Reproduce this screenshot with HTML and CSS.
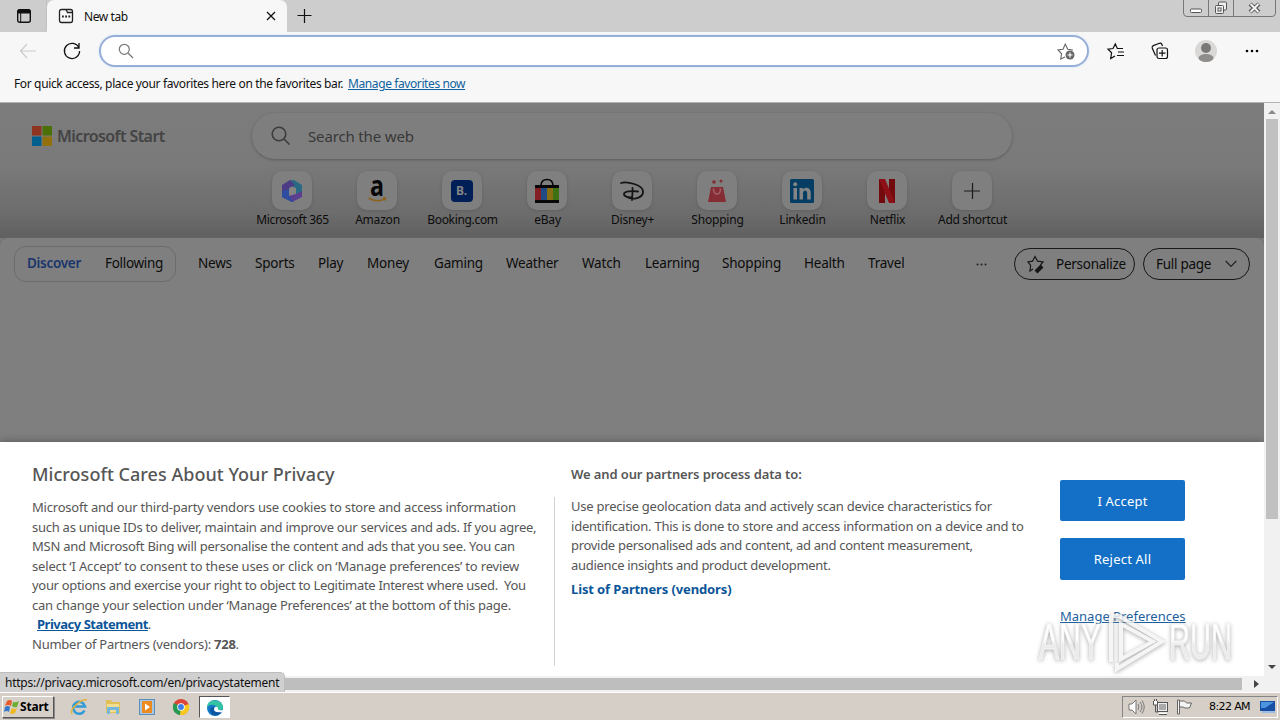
FILE: index.html
```
<!DOCTYPE html>
<html lang="en">
<head>
<meta charset="utf-8">
<title>New tab</title>
<link rel="stylesheet" href="styles.css">
</head>
<body>
<div class="screen">
  <header class="tabstrip">
    <div class="tab-actions"><svg width="14" height="14" viewBox="0 0 14 14"><rect x=".7" y=".7" width="12.6" height="12.6" rx="2" fill="none" stroke="#111" stroke-width="1.4"/><path d="M1 1h12v3H1zM3.700 4v9" stroke="#111" fill="#111"/></svg></div>
    <div class="tab">
      <svg width="16" height="16" viewBox="0 0 16 16" fill="none" stroke="#222" stroke-width="1.3"><path d="M3.500 1.500h9q2 0 2 2v9q0 2-2 2h-9q-2 0-2-2v-9q0-2 2-2zM8 1.500l1.500 3h5"/><path d="M4 8.500h1.800M7.200 8.500H9M10.400 8.500h1.800" stroke-width="1.800"/></svg>
      <span class="tab-title">New tab</span>
      <svg class="tab-close" width="10" height="10" viewBox="0 0 10 10"><path d="M1 1l8 8M9 1L1 9" stroke="#111" stroke-width="1.3"/></svg>
    </div>
    <svg class="newtab" width="16" height="16" viewBox="0 0 16 16"><path d="M7.500 1v14M.5 7.500h14" stroke="#111" stroke-width="1.2"/></svg>
    <div class="winbtns">
      <div class="wb wb-min"><svg width="14" height="6" viewBox="0 0 14 6"><rect x="1.500" y="1" width="11" height="3.500" rx="1" fill="#fff" stroke="#555"/></svg></div>
      <div class="wb wb-max"><svg width="14" height="14" viewBox="0 0 14 14" fill="#eee" stroke="#555"><rect x="4.500" y="1" width="8" height="8" rx="1"/><rect x="1.500" y="4.500" width="8" height="8" rx="1"/><rect x="4" y="7" width="3" height="3"/></svg></div>
      <div class="wb wb-close"><svg width="13" height="12" viewBox="0 0 13 12"><path d="M2 2l9 8M11 2l-9 8" stroke="#555" stroke-width="4.200"/><path d="M2.500 2l8 8M10.500 2l-8 8" stroke="#f2f2f2" stroke-width="2"/></svg></div>
    </div>
  </header>
  <div class="toolbar">
    <svg class="back" width="18" height="16" viewBox="0 0 18 16" fill="none" stroke="#ccc" stroke-width="1.2"><path d="M8 1L1.500 8 8 15M1.500 8H17"/></svg>
    <svg class="reload" width="18" height="18" viewBox="0 0 18 18" fill="none" stroke="#111" stroke-width="1.3"><path d="M15.800 5.500A7.600 7.600 0 1 0 16.600 9M16 1v5h-5"/></svg>
    <div class="omnibox">
      <svg width="16" height="16" viewBox="0 0 16 16" fill="none" stroke="#777" stroke-width="1.2"><circle cx="6.300" cy="6.300" r="5"/><path d="M10 10l5 5"/></svg>
      <svg class="addfav" width="18" height="18" viewBox="0 0 18 18"><path d="M8 15l-4.300 2 .9-5.200L1 8l5-.7L8.300 2l2.400 5.200 5.200.8" fill="none" stroke="#666" stroke-width="1.1"/><circle cx="13" cy="13" r="4.500" fill="#666"/><path d="M13 10.500v5M10.500 13h5" stroke="#fff" stroke-width="1.200"/></svg>
    </div>
    <svg class="fav" width="18" height="18" viewBox="0 0 18 18" fill="none" stroke="#111" stroke-width="1.2"><path d="M8 14l-4.300 2.500.9-5.700L1 7.200l5-.7L8.300 2l2 4.500H16M11 10h6M10 13.500h7"/></svg>
    <svg class="coll" width="18" height="18" viewBox="0 0 18 18" fill="none" stroke="#111" stroke-width="1.2"><path d="M4.500 13.500L1.200 6Q.8 4.300 2.300 3.600L8.500 1.300q1.700-.4 2.300 1l.7 1.700"/><rect x="6" y="6" width="10.500" height="10.500" rx="2"/><path d="M11.200 8v6.500M8 11.200h6.500"/></svg>
    <svg class="avatar" width="22" height="22" viewBox="0 0 22 22"><circle cx="11" cy="11" r="11" fill="#dad8d6"/><circle cx="11" cy="8" r="5" fill="#7a7876"/><ellipse cx="11" cy="18" rx="7.500" ry="4" fill="#8f8d8b"/></svg>
    <svg class="more" width="14" height="4" viewBox="0 0 14 4"><circle cx="2" cy="2" r="1.300"/><circle cx="7" cy="2" r="1.300"/><circle cx="12" cy="2" r="1.300"/></svg>
  </div>
  <div class="favbar"><span class="favtext">For quick access, place your favorites here on the favorites bar.</span><span class="favlink">Manage favorites now</span></div>

  <div class="viewport">
    <main class="page">
      <section class="hero">
        <div class="brand"><svg width="20" height="20" viewBox="0 0 20 20"><path fill="#8e3421" d="M0 0h9.500v9.500H0z"/><path fill="#4c7008" d="M10.500 0H20v9.500h-9.500z"/><path fill="#005f8c" d="M0 10.500h9.500V20H0z"/><path fill="#92700c" d="M10.500 10.500H20V20h-9.500z"/></svg><span class="brand-name">Microsoft Start</span></div>
        <div class="center">
          <div class="search"><svg width="20" height="20" viewBox="0 0 20 20" fill="none" stroke="#3c3c3c" stroke-width="1.6"><circle cx="8" cy="8" r="6.800"/><path d="M13 13l5.500 5.500"/></svg><span>Search the web</span></div>
          <div class="tiles">
            <div class="tile"><div class="ico"><svg width="24" height="24" viewBox="0 0 24 24"><path d="M9 1.500L14 1l8 5v8l-6 3V9L9 6z" fill="#286a83"/><path d="M10 1L2 6v12l4 2 3-3V9l6-3z" fill="#4d3c85"/><path d="M6 20l6 3 10-5v-6l-6 3-7 2z" fill="#5a3f90"/><path d="M2 12l7-2v7l5 6h-2l-10-5z" fill="#2e4ca0"/><path d="M12 8l4 2v4l-4 2-3-2v-4z" fill="#858585"/></svg></div><span class="l1">Microsoft 365</span></div>
            <div class="tile"><div class="ico"><svg width="24" height="26" viewBox="0 0 24 26"><text x="5" y="18" textLength="14" lengthAdjust="spacingAndGlyphs" class="amazon-a">a</text><path d="M3.500 20q8 5 16 1M18 19.500l2.500.5-.7 2.500" fill="none" stroke="#8b6220" stroke-width="1.500"/></svg></div><span>Amazon</span></div>
            <div class="tile"><div class="ico"><div class="booking">B.</div></div><span class="l3">Booking.com</span></div>
            <div class="tile"><div class="ico"><svg width="24" height="26" viewBox="0 0 24 26"><path d="M6 8q0-6.500 6-6.500T18 8" fill="none" stroke="#050505" stroke-width="1.500"/><path d="M0 7h24v18H0z" fill="#080808"/><path fill="#821e24" d="M0 10h6v12H0z"/><path fill="#204b87" d="M6 10h6v12H6z"/><path fill="#876e12" d="M12 10h6v12h-6z"/><path fill="#3d7114" d="M18 10h6v12h-6z"/></svg></div><span>eBay</span></div>
            <div class="tile"><div class="ico"><svg width="26" height="24" viewBox="0 0 26 24" fill="none" stroke="#151515" stroke-width="1.800" stroke-linecap="round"><path d="M2 4C7 2.500 25 5 24 13.500c-1 6-10 7-14 5.500M13.500 9c.5 4-.5 8-.5 12"/><path d="M19 12.500c-6-1-14 0-14 2.500s5 4 8 3"/></svg></div><span>Disney+</span></div>
            <div class="tile"><div class="ico"><svg width="20" height="24" viewBox="0 0 20 24"><path d="M4 8h12l3 15H1z" fill="#852c35"/><path d="M6.500 9.500q0 5.500 3.500 5.500t3.500-5.500" fill="none" stroke="#a05f65" stroke-width="1.600"/><circle cx="7" cy="3" r="1.800" fill="#852c35"/><circle cx="14" cy="2" r="1.500" fill="#852c35"/></svg></div><span>Shopping</span></div>
            <div class="tile"><div class="ico"><svg width="24" height="24" viewBox="0 0 24 24"><rect width="24" height="24" rx="1.500" fill="#063d63"/><path fill="#858585" d="M3.500 9H7v11.500H3.500zM9.500 9h3.400v1.600c2-3 7.800-2.700 7.800 3v6.900h-3.500v-6.300c0-3.600-4.200-3.300-4.200 0v6.300H9.500z"/><circle cx="5.200" cy="5.300" r="2" fill="#858585"/></svg></div><span>Linkedin</span></div>
            <div class="tile"><div class="ico"><svg width="18" height="24" viewBox="0 0 18 24"><path fill="#720a0e" d="M1 0h6v24H1zM11 0h6v24h-6z"/><path fill="#8d1016" d="M1 0h6l10 24h-6z"/></svg></div><span>Netflix</span></div>
            <div class="tile"><div class="ico"><svg width="16" height="16" viewBox="0 0 16 16"><path d="M8.500 0v16M0 8h16" stroke="#1c1c1c" stroke-width="1.200"/></svg></div><span class="l9">Add shortcut</span></div>
          </div>
        </div>
      </section>
      <section class="feed">
        <div class="pill-tabs"><b>Discover</b><span>Following</span></div>
        <nav class="topics"><span>News</span><span>Sports</span><span>Play</span><span>Money</span><span>Gaming</span><span>Weather</span><span>Watch</span><span>Learning</span><span>Shopping</span><span>Health</span><span>Travel</span></nav>
        <svg class="topic-more" width="11" height="3" viewBox="0 0 11 3" fill="#222"><circle cx="1.500" cy="1.500" r="1"/><circle cx="5.500" cy="1.500" r="1"/><circle cx="9.500" cy="1.500" r="1"/></svg>
        <div class="btn personalize"><svg width="18" height="18" viewBox="0 0 18 18"><path d="M6 14l-3 2 .6-5.500L1 7l4.500-.8L8 1.500l2.600 4.700L16 7l-2.500 3" fill="none" stroke="#151515" stroke-width="1.200"/><path d="M15 11L9 17" stroke="#151515" stroke-width="4"/></svg><span>Personalize</span></div>
        <div class="btn fullpage"><span>Full page</span><svg width="12" height="8" viewBox="0 0 12 8"><path d="M.7 1L6 6.500 11.300 1" fill="none" stroke="#222" stroke-width="1.200"/></svg></div>
      </section>
      <section class="consent">
        <div class="col policy">
          <h2>Microsoft Cares About Your Privacy</h2>
          <p><span class="a1">Microsoft and our third-party vendors use cookies to store and access information</span><br><span class="a2">such as unique IDs to deliver, maintain and improve our services and ads. If you agree,</span><br><span class="a3">MSN and Microsoft Bing will personalise the content and ads that you see. You can</span><br><span class="a4">select ‘I Accept’ to consent to these uses or click on ‘Manage preferences’ to review</span><br><span class="a5">your options and exercise your right to object to Legitimate Interest where used.&nbsp; You</span><br><span class="a6">can change your selection under ‘Manage Preferences’ at the bottom of this page.</span><br><span class="a7"><a>Privacy Statement</a>.</span><br><span class="a8">Number of Partners (vendors): <b>728</b>.</span></p>
        </div>
        <div class="col purposes">
          <h3>We and our partners process data to:</h3>
          <p><span class="b1">Use precise geolocation data and actively scan device characteristics for</span><br><span class="b2">identification. This is done to store and access information on a device and to</span><br><span class="b3">provide personalised ads and content, ad and content measurement,</span><br><span class="b4">audience insights and product development.</span></p>
          <div class="partners">List of Partners (vendors)</div>
        </div>
        <div class="choices">
          <div class="cta">I Accept</div>
          <div class="cta">Reject All</div>
          <a class="manage">Manage Preferences</a>
        </div>
      </section>
      <div class="hscroll"><div class="hthumb"></div><i class="arrow-right"></i></div>
    </main>
    <aside class="vscroll"><i class="arrow-up"></i><div class="vthumb"></div><i class="arrow-down"></i></aside>
    <div class="status">https://privacy.microsoft.com/en/privacystatement</div>
    <svg class="watermark" width="206" height="66" viewBox="0 0 206 66">
      <defs><linearGradient id="fade" x1="0" y1="0" x2="0" y2="1"><stop offset=".45" stop-color="#fff"/><stop offset=".55" stop-color="#e8e8e8"/></linearGradient></defs>
      <g class="wm"><text x="7" y="49" textLength="62" lengthAdjust="spacingAndGlyphs">ANY</text><text x="137" y="49" textLength="63" lengthAdjust="spacingAndGlyphs">RUN</text><path d="M89 14v35l32-17.500zM79 6v46M79 6l8 0L130 31.500 85 59v-6" fill="none" stroke="#f4f4f4" stroke-width="4"/></g></svg>
  </div>

  <footer class="taskbar">
    <div class="start"><svg width="16" height="16" viewBox="0 0 16 16"><path d="M3 2q3-2 5 0L7 7Q4 5 1 7z" fill="#e65c2a"/><path d="M9 3q3 1 6-1l-2 6q-3 1-5-1z" fill="#6eae32"/><path d="M1 8q3-2 5 0l-1 5q-2-2-5 0z" fill="#3578cb"/><path d="M8 9q2 2 5 0l-2 5q-3 2-5 0z" fill="#eeb91f"/></svg><span>Start</span></div>
    <svg class="q1" width="18" height="18" viewBox="0 0 18 18" fill="none"><path d="M14.500 12.500A6 6 0 1 1 15 8.500H5" stroke="#2f9bd8" stroke-width="2.600"/><path d="M2 16C-1 11 12 0 17 2" stroke="#e6b23a" stroke-width="1.400"/></svg>
    <svg class="q2" width="18" height="18" viewBox="0 0 18 18"><path d="M2 2h5l1 2h8v11H2z" fill="#e3bf58"/><path d="M3 6h12v8H3z" fill="#f3dd92"/><path d="M3 9h12v7h-3v-4H6v4H3z" fill="#74b8df"/></svg>
    <svg class="q3" width="16" height="16" viewBox="0 0 16 16"><rect x=".5" y=".5" width="15" height="15" fill="#a7c6df" stroke="#5d8fbc"/><rect x="3" y="2" width="10" height="12" fill="#ed8b20"/><path d="M6 4.500l5 3.500-5 3.500z" fill="#fff"/></svg>
    <svg class="q4" width="16" height="16" viewBox="0 0 16 16"><circle cx="8" cy="8" r="8" fill="#dc4437"/><path d="M8 8L1 4a8 8 0 0 0 6 12l4-6z" fill="#269b53"/><path d="M8 8l7.500-3A8 8 0 0 1 7 16z" fill="#f8c81c"/><circle cx="8" cy="8" r="3.800" fill="#fff"/><circle cx="8" cy="8" r="2.900" fill="#3f7ee8"/></svg>
    <div class="active"><svg width="18" height="18" viewBox="0 0 18 18"><circle cx="9" cy="9" r="8" fill="#1678c9"/><path d="M1 9C1 2 8 0 13 2.500c4 2 5 6 3 8-2 1.500-5 1-5-1C11 5 3 4 1 9z" fill="#35c4a1"/><path d="M8 8c-2 3 2 7 8 4-2 5-9 6-11 2-2-3 0-6 3-6z" fill="#0b569f"/><path d="M9 8q3-1 3 2 0 2 5 1l-1 2Q8 14 8 10z" fill="#fff"/></svg></div>
    <div class="tray">
      <svg class="t1" width="17" height="16" viewBox="0 0 17 16" fill="none" stroke="#777"><path d="M1 5h3l4-4v14l-4-4H1z" fill="#fff"/><path d="M10 5q2 3 0 6M12 3q4 5 0 10M14 1.500q4.500 6.500 0 13"/></svg>
      <svg class="t2" width="17" height="16" viewBox="0 0 17 16" fill="none" stroke="#555"><rect x="5.500" y="3.500" width="10" height="9" fill="#aaa"/><rect x="6.500" y="4.500" width="8" height="7" stroke="#eee"/><path d="M7 14.500h8" stroke="#fff" stroke-width="2"/><path d="M7 15.500h8M3.500 6v7H6"/><path d="M1.500 2v4h4V2" fill="#fff"/><path d="M2.500 0v2M4.500 0v2"/></svg>
      <svg class="t3" width="17" height="16" viewBox="0 0 17 16" fill="#f4f4f4" stroke="#666"><path d="M1.500 1h2v14h-2zM3.500 2h5l2 2h5l-2 5H9L7 8H3.500z"/></svg>
      <span class="clock">8:22 AM</span>
      <svg class="t4" width="16" height="14" viewBox="0 0 16 14"><path d="M0 1h15v10H0z" fill="#174fa5"/><path d="M1 2h13L5 8H1z" fill="#4b95e0"/><path d="M2 11h13v2H2z" fill="#9bbde1"/></svg>
    </div>
  </footer>
</div>
</body>
</html>
```
FILE: styles.css
```
* { box-sizing: border-box; }
body { margin: 0; font-family: "Noto Sans", "Open Sans", sans-serif; color: #111; }
svg { display: block; flex: none; overflow: visible; }
.screen { width: 1280px; height: 720px; display: flex; flex-direction: column; overflow: hidden; white-space: nowrap; background: #fff; }

.tabstrip { height: 32px; flex: none; display: flex; align-items: flex-start; background: #cdcdcd; }
.tab-actions { width: 47px; height: 32px; padding: 9px 0 0 17px; border-right: 1px solid #c1c1c1; border-radius: 0 0 6px 0; }
.tab { width: 240px; height: 32px; display: flex; align-items: center; padding: 0 11px; background: #f7f7f7; border-radius: 7px 7px 0 0; }
.tab-title { margin-left: 10px; font-size: 12px; letter-spacing: -.4px; }
.tab-close { margin-left: auto; }
.newtab { margin: 8px 0 0 10px; }
.winbtns { margin: -1px 4px 0 auto; height: 18px; display: flex; border: 1px solid #777; border-radius: 0 0 4px 4px; }
.wb { display: flex; align-items: center; justify-content: center; border-right: 1px solid #777; }
.wb-min { width: 25px; padding-top: 5px; }
.wb-max { width: 25px; }
.wb-close { width: 41px; border-right: 0; }

.toolbar { height: 38px; flex: none; display: flex; align-items: center; padding-left: 19px; background: #f7f7f7; }
.reload { margin-left: 26px; }
.omnibox { width: 990px; height: 32px; margin-left: 18px; display: flex; align-items: center; padding: 0 12px 0 17px; border: 2px solid #97afd8; border-radius: 16px; background: #fff; box-shadow: 0 0 1px 1px #e6eff8; }
.addfav { margin-left: auto; }
.fav { margin-left: 18px; }
.coll { margin-left: 26px; }
.avatar { margin-left: 26px; }
.more { margin-left: 28px; }
.favbar { height: 33px; flex: none; padding: 5px 0 0 14px; font-size: 12px; line-height: 18px; background: #f7f7f7; border-bottom: 1px solid #b4b4b4; display: flex; }
.favtext { width: 334px; letter-spacing: -.36px; }
.favlink { color: #0f62a0; text-decoration: underline; letter-spacing: -.4px; }

.viewport { position: relative; height: 589px; flex: none; display: flex; }
.page { width: 1264px; height: 589px; display: flex; flex-direction: column; background: #7f7f7f; }
.hero { height: 135px; flex: none; display: flex; background: linear-gradient(#7c7c7c 0, #7a7a7a 45%, #6d6d6d 80%, #606060 100%); }
.brand { width: 252px; padding: 23px 0 0 32px; display: flex; align-items: flex-start; }
.brand-name { margin-left: 5px; font-size: 16px; font-weight: 600; line-height: 20px; letter-spacing: -.58px; color: #434343; }
.center { width: 760px; padding-top: 10px; }
.search { height: 46px; display: flex; align-items: center; padding-left: 19px; border-radius: 23px; background: #7e7e7e; box-shadow: 0 1px 3px #5c5c5c; font-size: 15px; letter-spacing: -.15px; color: #383838; }
.search span { margin-left: 17px; }
.tiles { display: flex; margin-left: -3px; padding-top: 12px; }
.tile { width: 85px; flex: none; display: flex; flex-direction: column; align-items: center; font-size: 12px; line-height: 16px; color: #0c0c0c; }
.tile > span { margin-left: 2px; letter-spacing: -.2px; }
.ico { width: 40px; height: 39px; margin-bottom: 2px; display: flex; align-items: center; justify-content: center; border-radius: 10px; background: #7f7f7f; box-shadow: 0 1px 3px #606060; }
.tile .l1, .tile .l3, .tile .l9 { letter-spacing: -.33px; }
.amazon-a { font: bold 29px "Open Sans", sans-serif; fill: #080808; }
.booking { width: 22px; height: 22px; border-radius: 4px; background: #001f56; color: #858585; font-size: 12px; font-weight: 700; line-height: 22px; text-align: center; }

.feed { height: 204px; flex: none; display: flex; align-items: flex-start; padding: 8px 14px 0; border-radius: 8px 8px 0 0; background: #7f7f7f; font-size: 13.5px; color: #0c0c0c; box-shadow: 0 -1px 2px #666; }
.pill-tabs { width: 162px; height: 36px; display: flex; align-items: center; padding: 0 0 2px 12px; border: 1px solid #6c6c6c; border-radius: 12px; letter-spacing: -.3px; }
.pill-tabs b { width: 78px; font-weight: 600; color: #19356b; }
.topics { display: grid; grid-template-columns: 57px 63px 49px 67px 72px 76px 63px 77px 82px 64px 50px; margin-left: 22px; line-height: 35px; letter-spacing: -.2px; }
.topic-more { margin: 17px 0 0 58px; }
.btn { height: 32px; margin-top: 2px; display: flex; align-items: center; border: 1px solid #181818; border-radius: 16px; letter-spacing: -.27px; }
.personalize { width: 121px; margin-left: 27px; padding-left: 12px; }
.personalize span { margin-left: 11px; }
.fullpage { width: 107px; margin-left: 8px; padding: 0 12px; justify-content: space-between; }

.consent { height: 234px; flex: none; display: flex; background: #fff; color: #565656; box-shadow: 0 0 8px #555; }
.policy { width: 555px; padding: 20px 0 0 32px; }
h2 { margin: 0; font-size: 18px; line-height: 25px; font-weight: 500; letter-spacing: .03px; }
p { margin: 0; font-size: 13px; line-height: 19.5px; }
.policy p { margin-top: 11px; }
.policy a { color: #0b5599; font-weight: 700; text-decoration: underline; }
.a1 { letter-spacing: -.21px; }
.a2 { letter-spacing: -.26px; }
.a3 { letter-spacing: -.25px; }
.a4 { letter-spacing: -.17px; }
.a5 { letter-spacing: -.31px; }
.a6 { letter-spacing: -.25px; }
.a7 { margin-left: 5px; letter-spacing: -.48px; }
.a8 { letter-spacing: -.25px; }
.b1, .b2 { letter-spacing: -.22px; }
.b3, .b4 { letter-spacing: -.3px; }
.purposes { width: 505px; padding: 23px 0 0 16px; position: relative; }
.purposes::before { content: ""; position: absolute; left: -1px; top: 55px; width: 1px; height: 169px; background: #d2d2d2; }
h3 { margin: 0; font-size: 13px; line-height: 19px; font-weight: 600; letter-spacing: -.11px; }
.purposes p { margin-top: 13px; }
.partners { margin-top: 5px; font-size: 13px; line-height: 19px; font-weight: 700; color: #0b5599; letter-spacing: -.12px; }
.choices { width: 125px; padding-top: 38px; display: flex; flex-direction: column; }
.cta { height: 41px; flex: none; margin-bottom: 17px; border-radius: 2px; background: #1370c6; color: #fff; font-size: 13px; line-height: 42px; text-align: center; letter-spacing: .2px; }
.cta + .cta { height: 42px; }
.manage { margin-top: 9px; font-size: 13px; line-height: 20px; color: #1d5f9e; text-decoration: underline; }

.hscroll { height: 16px; display: flex; align-items: center; background: #f1f1f1; }
.hthumb { width: 1242px; flex: none; height: 12px; background: #bebebe; }
.arrow-right { margin-left: 12px; border: 4px solid transparent; border-left: 5px solid #444; border-right: 0; }
.vscroll { width: 16px; display: flex; flex-direction: column; align-items: center; background: #f1f1f1; }
.arrow-up { margin-top: 7px; border: 4px solid transparent; border-top: 0; border-bottom: 4px solid #888; }
.vthumb { width: 12px; height: 400px; margin-top: 5px; background: #c1c1c1; }
.arrow-down { margin-top: 146px; border: 4px solid transparent; border-bottom: 0; border-top: 4px solid #444; }
.status { position: absolute; left: 0; top: 569px; width: 285px; height: 20px; padding-left: 5px; font-size: 12px; line-height: 19px; letter-spacing: -.24px; background: #d0d0d0; border: solid #bdbdbd; border-width: 1px 1px 0 0; border-radius: 0 5px 0 0; }
.watermark { position: absolute; left: 1032px; top: 507px; opacity: .85; }
.wm { fill: url(#fade); font: 50px "Liberation Sans", sans-serif; filter: drop-shadow(0 1px 2px #999); }
.wm text { stroke: #f4f4f4; stroke-width: 1px; }

.taskbar { height: 28px; flex: none; display: flex; align-items: center; padding: 0 2px; background: #d6cfc7; border-top: 1px solid #fff; }
.start { width: 52px; height: 22px; display: flex; align-items: center; padding-left: 1px; border: 1px solid; border-color: #fff #555 #555 #fff; box-shadow: 1px 1px 0 #888; font-size: 12px; font-weight: 700; color: #000; }
.start span { letter-spacing: -.2px; }
.q1 { margin-left: 16px; }
.q2 { margin-left: 16px; }
.q3 { margin-left: 17px; }
.q4 { margin-left: 18px; }
.active { width: 31px; height: 22px; margin-left: 10px; padding: 2px 0 0 6px; background: #fff; border: 1px solid; border-color: #555 #fff #fff #555; }
.tray { width: 156px; height: 22px; margin-left: auto; display: flex; align-items: center; border: 1px solid; border-color: #858585 #fff #fff #858585; padding-left: 5px; }
.t2 { margin-left: 7px; }
.t3 { margin-left: 7px; }
.clock { width: 41px; margin-left: 16px; font: 11px "DejaVu Sans", sans-serif; color: #000; letter-spacing: -.6px; }
.t4 { margin-left: 10px; }
```
